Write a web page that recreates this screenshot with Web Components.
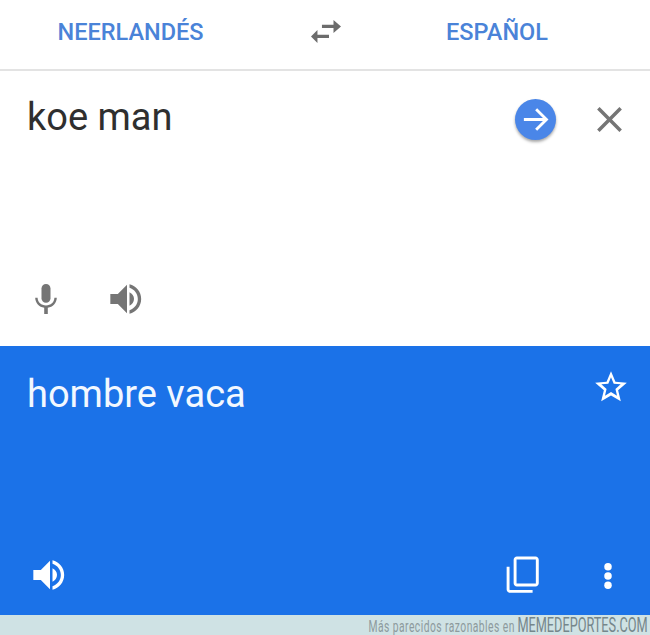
<!DOCTYPE html>
<html lang="es">
<head>
<meta charset="utf-8">
<title>Traductor</title>
<style>
	html, body { margin: 0; height: 100%; background: #fff; }
	body { font-family: Roboto, "Liberation Sans", sans-serif; }
</style>
</head>
<body>
<trd-app>
	<trd-barra origen="NEERLANDÉS" destino="ESPAÑOL"></trd-barra>
	<trd-entrada texto="koe man"></trd-entrada>
	<trd-salida texto="hombre vaca"></trd-salida>
	<trd-pie><span>Más parecidos razonables en</span> <b>MEMEDEPORTES.COM</b></trd-pie>
</trd-app>

<script>
// Iconos del traductor, todos sobre una caja de 24x24
const iconos = {
	cambio: '<path d="M9.300 7.200h7.700V4l5 4.300-5 4.300V9.400H9.300z"/><path d="M14 13.800v2.200H6.300v3.300L2 15l4.300-4.300v3.100z"/>',
	micro: '<path d="M12 14.500c1.700 0 3-1.300 3-3V5c0-1.700-1.300-3-3-3S9 3.300 9 5v6.500c0 1.700 1.300 3 3 3z"/><path d="M17.600 11.200c0 3-2.500 5.100-5.600 5.100s-5.600-2.100-5.600-5.100H4.800c0 3.400 2.700 6.200 6 6.700V22h2.400v-4.100c3.300-.5 6-3.300 6-6.700z"/>',
	altavoz: '<path d="M2 9v6h4.500l5.500 5.500v-17L6.500 9z"/><path d="M13.500 8v8c1.600-.7 2.700-2.300 2.700-4s-1.100-3.300-2.700-4z"/><path d="M13.500 3.200v2.100c2.900.9 5 3.600 5 6.700s-2.100 5.800-5 6.700v2.100c4-.9 7-4.500 7-8.800s-3-7.900-7-8.800z"/>',
	cerrar: '<path d="M20.500 5.200 18.800 3.500 12 10.300 5.200 3.500 3.500 5.200 10.300 12l-6.800 6.800 1.700 1.700 6.800-6.800 6.800 6.800 1.700-1.700-6.800-6.800z"/>',
	estrella: '<path d="M22 9.300l-7.200-.6L12 2 9.200 8.700 2 9.300l5.500 4.700L5.800 21l6.200-3.700 6.200 3.700-1.700-7zM12 15.200l-3.800 2.300 1-4.300-3.300-2.900 4.400-.4L12 5.800l1.700 4.100 4.400.4-3.300 2.900 1 4.300z"/>',
	copiar: '<path d="M3.300 7.500v13.300c0 1 .9 1.900 1.900 1.900h13.300v-1.700H5.200c-.1 0-.2-.1-.2-.2V7.500z"/><path d="M20.200 1.500H9.300c-1 0-1.900.9-1.900 1.900v13.700c0 1 .9 1.900 1.900 1.900h10.900c1 0 1.900-.9 1.900-1.900V3.400c0-1-.9-1.900-1.900-1.900zm.2 15.800H9.100V3.200h11.300z"/>',
	puntos: '<circle cx="12" cy="4.600" r="3"/><circle cx="12" cy="12" r="3"/><circle cx="12" cy="19.400" r="3"/>'
};

class trdIcono extends HTMLElement {
	connectedCallback() {
		const tam = this.getAttribute("tam") || 24;
		this.attachShadow({mode: "open"}).innerHTML = `
			<style>
				:host { display: block; width: ${tam}px; height: ${tam}px; color: inherit; }
				svg { display: block; width: 100%; height: 100%; fill: currentColor; }
			</style>
			<svg viewBox="0 0 24 24">${iconos[this.getAttribute("nombre")]}</svg>`;
	}
}

class trdApp extends HTMLElement {
	constructor() {
		super();
		this.attachShadow({mode: "open"}).innerHTML = `
			<style>
				:host { display: grid; grid-template-rows: 71px 275px 269px 20px; height: 635px; width: 650px; overflow: hidden; }
			</style>
			<slot></slot>`;
	}
}

class trdBarra extends HTMLElement {
	connectedCallback() {
		this.attachShadow({mode: "open"}).innerHTML = `
			<style>
				:host { display: grid; grid-template-columns: 261px 130px 212px; align-items: center; box-sizing: border-box; border-bottom: 2px solid #e3e3e3; padding-bottom: 6px; background: #fff; }
				span { font: 500 23.500px Roboto, sans-serif; color: #4a83d8; text-align: center; }
				trd-icono { justify-self: center; color: #6c6c6c; }
			</style>
			<span>${this.getAttribute("origen")}</span>
			<trd-icono nombre="cambio" tam="36"></trd-icono>
			<span>${this.getAttribute("destino")}</span>`;
	}
}

class trdEntrada extends HTMLElement {
	connectedCallback() {
		this.attachShadow({mode: "open"}).innerHTML = `
			<style>
				:host { display: flex; flex-direction: column; justify-content: space-between; background: #fff; color: #757575; padding: 21px 23px 27px 27px; }
				.fila { display: flex; align-items: center; }
				.txt { flex: 1; font: 400 38px/50px Roboto, sans-serif; color: #2f2f2f; margin-bottom: 4px; }
				.ir { width: 41px; height: 41px; border-radius: 50%; background: #4a86e8; color: #fff; box-shadow: 0 2px 3px rgba(0,0,0,.35); display: flex; align-items: center; justify-content: center; margin-right: 36px; }
				.ir svg { width: 31px; height: 31px; fill: none; stroke: currentColor; stroke-width: 2.200; }
				.acc { display: flex; align-items: center; gap: 43px; margin-left: 1px; }
			</style>
			<div class="fila">
				<div class="txt">${this.getAttribute("texto")}</div>
				<div class="ir"><svg viewBox="0 0 24 24"><path d="M3 12h17M12.500 4l8 8-8 8"/></svg></div>
				<trd-icono nombre="cerrar" tam="35"></trd-icono>
			</div>
			<div class="acc">
				<trd-icono nombre="micro" tam="36"></trd-icono>
				<trd-icono nombre="altavoz" tam="40"></trd-icono>
			</div>`;
	}
}

class trdSalida extends HTMLElement {
	connectedCallback() {
		this.attachShadow({mode: "open"}).innerHTML = `
			<style>
				:host { display: flex; flex-direction: column; justify-content: space-between; background: #1b72e8; color: #fff; padding: 22px 20px 20px 27px; }
				.fila { display: flex; align-items: flex-start; }
				.txt { flex: 1; font: 400 38px/50px Roboto, sans-serif; color: #f2f8ff; margin-top: 1px; }
				.acc { display: flex; align-items: center; }
				.acc .sep { flex: 1; }
				.voz { margin: 1px 0 0 3px; }
				.copiar { margin-right: 51px; }
				.puntos { margin: 2px 7px 0 0; }
			</style>
			<div class="fila">
				<div class="txt">${this.getAttribute("texto")}</div>
				<trd-icono nombre="estrella" tam="38"></trd-icono>
			</div>
			<div class="acc">
				<trd-icono class="voz" nombre="altavoz" tam="40"></trd-icono>
				<div class="sep"></div>
				<trd-icono class="copiar" nombre="copiar" tam="41"></trd-icono>
				<trd-icono class="puntos" nombre="puntos" tam="30"></trd-icono>
			</div>`;
	}
}

class trdPie extends HTMLElement {
	constructor() {
		super();
		this.attachShadow({mode: "open"}).innerHTML = `
			<style>
				:host { display: flex; justify-content: flex-end; align-items: center; height: 20px; background: #cfe2e4; color: #75868b; white-space: nowrap; }
				.marca { display: block; transform: scaleX(.606); transform-origin: right center; font: 400 17px/20px Roboto, sans-serif; margin-right: 2px; }
				::slotted(span) { letter-spacing: .75px; color: #8d9a9d; }
				::slotted(b) { font-size: 21px; font-weight: 400; line-height: 20px; }
			</style>
			<div class="marca"><slot></slot></div>`;
	}
}

customElements.define("trd-icono", trdIcono);
customElements.define("trd-app", trdApp);
customElements.define("trd-barra", trdBarra);
customElements.define("trd-entrada", trdEntrada);
customElements.define("trd-salida", trdSalida);
customElements.define("trd-pie", trdPie);
</script>
</body>
</html>
